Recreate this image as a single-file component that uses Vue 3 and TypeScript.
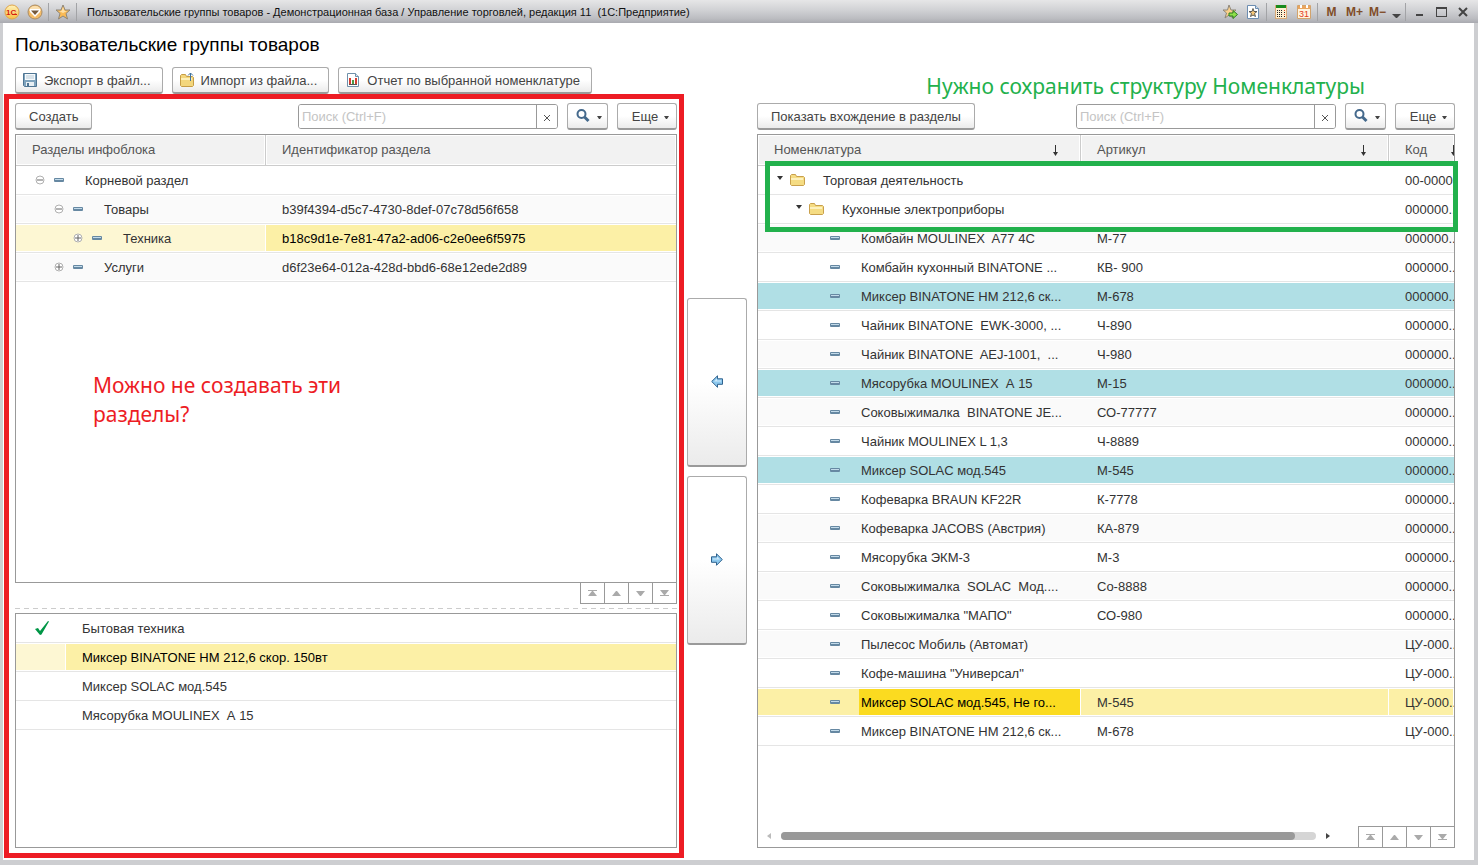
<script setup lang="ts">
import { ref } from 'vue'

interface Section {
  level: number
  open: boolean
  name: string
  id: string
  selected?: boolean
}

interface Item {
  level: number
  folder?: boolean
  name: string
  article: string
  code: string
  state?: 'marked' | 'current'
}

const sections: Section[] = [
  { level: 0, open: true, name: 'Корневой раздел', id: '' },
  { level: 1, open: true, name: 'Товары', id: 'b39f4394-d5c7-4730-8def-07c78d56f658' },
  { level: 2, open: false, name: 'Техника', id: 'b18c9d1e-7e81-47a2-ad06-c2e0ee6f5975', selected: true },
  { level: 1, open: false, name: 'Услуги', id: 'd6f23e64-012a-428d-bbd6-68e12ede2d89' },
]

const chosen = [
  { name: 'Бытовая техника', checked: true, selected: false },
  { name: 'Миксер BINATONE HM 212,6 скор. 150вт', checked: false, selected: true },
  { name: 'Миксер SOLAC мод.545', checked: false, selected: false },
  { name: 'Мясорубка MOULINEX  А 15', checked: false, selected: false },
]

const items: Item[] = [
  { level: 0, folder: true, name: 'Торговая деятельность', article: '', code: '00-0000...' },
  { level: 1, folder: true, name: 'Кухонные электроприборы', article: '', code: '000000...' },
  { level: 2, name: 'Комбайн MOULINEX  A77 4C', article: 'М-77', code: '000000...' },
  { level: 2, name: 'Комбайн кухонный BINATONE ...', article: 'КВ- 900', code: '000000...' },
  { level: 2, name: 'Миксер BINATONE HM 212,6 ск...', article: 'М-678', code: '000000...', state: 'marked' },
  { level: 2, name: 'Чайник BINATONE  EWK-3000, ...', article: 'Ч-890', code: '000000...' },
  { level: 2, name: 'Чайник BINATONE  AEJ-1001,  ...', article: 'Ч-980', code: '000000...' },
  { level: 2, name: 'Мясорубка MOULINEX  А 15', article: 'М-15', code: '000000...', state: 'marked' },
  { level: 2, name: 'Соковыжималка  BINATONE JE...', article: 'СО-77777', code: '000000...' },
  { level: 2, name: 'Чайник MOULINEX L 1,3', article: 'Ч-8889', code: '000000...' },
  { level: 2, name: 'Миксер SOLAC мод.545', article: 'М-545', code: '000000...', state: 'marked' },
  { level: 2, name: 'Кофеварка BRAUN KF22R', article: 'К-7778', code: '000000...' },
  { level: 2, name: 'Кофеварка JACOBS (Австрия)', article: 'КА-879', code: '000000...' },
  { level: 2, name: 'Мясорубка ЭКМ-3', article: 'М-3', code: '000000...' },
  { level: 2, name: 'Соковыжималка  SOLAC  Мод....', article: 'Со-8888', code: '000000...' },
  { level: 2, name: 'Соковыжималка "МАПО"', article: 'СО-980', code: '000000...' },
  { level: 2, name: 'Пылесос Мобиль (Автомат)', article: '', code: 'ЦУ-000...' },
  { level: 2, name: 'Кофе-машина "Универсал"', article: '', code: 'ЦУ-000...' },
  { level: 2, name: 'Миксер SOLAC мод.545, Не го...', article: 'М-545', code: 'ЦУ-000...', state: 'current' },
  { level: 2, name: 'Миксер BINATONE HM 212,6 ск...', article: 'М-678', code: 'ЦУ-000...' },
]

const navButtons = [
  { label: 'В начало', path: 'M1 0h9v1H1zM5 1h1l4 5H1z' },
  { label: 'Вверх', path: 'M5 1h1l4 5H1z' },
  { label: 'Вниз', path: 'M1 1h9L6 6H5z' },
  { label: 'В конец', path: 'M1 0h9L6 5H5zM1 5h9v1H1z' },
]

const leftSearch = ref('')
const rightSearch = ref('')
const indent = (level: number) => ({ paddingLeft: `${level * 19}px` })
</script>

<template>
  <div class="window">
    <header class="titlebar">
      <button class="tb-button" aria-label="Главное меню">
        <svg width="16" height="16" viewBox="0 0 16 16">
          <defs>
            <linearGradient id="gold" x1="0" y1="0" x2="0" y2="1">
              <stop offset="0" stop-color="#fff3ba" /><stop offset="1" stop-color="#f7bf45" />
            </linearGradient>
          </defs>
          <circle cx="8" cy="8" r="7" fill="url(#gold)" stroke="#e0a54a" />
          <text x="2" y="11" font-size="8" font-weight="bold" font-family="Liberation Sans, sans-serif" fill="#d42011">1С</text>
          <path d="M8 10.500h5" stroke="#d42011" />
        </svg>
      </button>
      <button class="tb-button" aria-label="Меню окна">
        <svg width="16" height="16" viewBox="0 0 16 16">
          <circle cx="8" cy="8" r="7" fill="#f5bd68" stroke="#a98c66" />
          <path d="M2 7a6 5 0 0 1 12 0z" fill="#fbe0b0" />
          <path d="M3 5h10v3l-5 5-5-5z" fill="#fff" /><path d="M4 6.500h8L8 11z" fill="#765a3c" />
        </svg>
      </button>
      <i class="tb-sep"></i>
      <button class="tb-button" aria-label="Избранное">
        <svg width="16" height="16" viewBox="0 0 16 16">
          <path d="M8 1l2 5h5l-4 3.500 1.500 5.500L8 12l-4.500 3L5 9.500 1 6h5z" fill="#fbbb55" stroke="#8e8678" />
          <path d="M8 3l1.500 4H12l-4 2-4-2h2.500z" fill="#ffe0a5" />
        </svg>
      </button>
      <i class="tb-sep"></i>
      <span class="tb-title">Пользовательские группы товаров - Демонстрационная база / Управление торговлей, редакция 11&nbsp; (1С:Предприятие)</span>
      <button class="tb-button" aria-label="Добавить в избранное">
        <svg width="16" height="16" viewBox="0 0 16 16">
          <path d="M7 1l2 5h5l-4 3.500 1 4.500-4-3-4 3 1.500-5L1 6h4.500z" fill="#fbd08a" stroke="#8e8678" />
          <path d="M7 9h4V6.500l4.500 4-4.500 4V12H7z" fill="#8fe04a" stroke="#2f7d23" />
        </svg>
      </button>
      <button class="tb-button" aria-label="Список избранного">
        <svg width="14" height="16" viewBox="0 0 14 16">
          <path d="M1.500 1.500h8l3 3v10h-11z" fill="#fff" stroke="#6c8db1" />
          <path d="M9.500 1.500v3h3" fill="#cfdeed" stroke="#6c8db1" />
          <path d="M7 4.500l1 3h3L8.500 9.500l1 3L7 11l-2.500 1.500 1-3L3 7.500h3z" fill="#f8c878" stroke="#5c5a55" />
        </svg>
      </button>
      <i class="tb-sep"></i>
      <button class="tb-button" aria-label="Калькулятор">
        <svg width="14" height="16" viewBox="0 0 14 16" shape-rendering="crispEdges">
          <path d="M1.500 1.500h11v13h-11z" fill="#fff0d2" stroke="#d8aa78" />
          <path d="M2 1h10v3H2z" fill="#178a1d" />
          <path d="M3 6h1v1H3zm2 0h1v1H5zm2 0h1v1H7zM3 8h1v1H3zm2 0h1v1H5zm2 0h1v1H7zM3 10h1v1H3zm2 0h1v1H5zm2 0h1v1H7zM3 12h1v1H3zm2 0h1v1H5zm2 0h1v1H7zM10 8h1v1h-1zm0 4h1v1h-1z" fill="#222" />
          <path d="M10 6h1v1h-1zm0 4h1v1h-1z" fill="#e03a1e" />
        </svg>
      </button>
      <button class="tb-button" aria-label="Календарь">
        <svg width="14" height="16" viewBox="0 0 14 16">
          <path d="M.5 1.500h13v13H.5z" fill="#fff4df" stroke="#d2a36c" />
          <path d="M1 2h12v3H1z" fill="#e9a55f" /><path d="M3 1h2v3H3zM9 1h2v3H9z" fill="#fff" />
          <text x="2" y="13" font-size="9" font-family="Liberation Sans, sans-serif" fill="#e33a1c">31</text>
        </svg>
      </button>
      <i class="tb-sep"></i>
      <button class="tb-button memory">M</button>
      <button class="tb-button memory">M+</button>
      <button class="tb-button memory">M−</button>
      <button class="tb-button narrow" aria-label="Параметры панели">
        <svg width="9" height="12" viewBox="0 0 9 12"><path d="M0 8h9L5 12H4z" fill="#444" /></svg>
      </button>
      <i class="tb-sep"></i>
      <button class="tb-button system" aria-label="Свернуть">
        <svg width="12" height="12" viewBox="0 0 12 12"><path d="M3 8h7v2H3z" fill="#444" /></svg>
      </button>
      <button class="tb-button system" aria-label="Развернуть">
        <svg width="12" height="12" viewBox="0 0 12 12" shape-rendering="crispEdges"><path d="M1 1h11v10H1z M2 3v7h9V3z" fill="#444" fill-rule="evenodd" /></svg>
      </button>
      <button class="tb-button system" aria-label="Закрыть">
        <svg width="12" height="12" viewBox="0 0 12 12"><path d="M2 2l8 8M10 2l-8 8" stroke="#444" stroke-width="2" /></svg>
      </button>
    </header>

    <main class="content">
      <h1>Пользовательские группы товаров</h1>
      <div class="commands">
        <button class="btn with-icon">
          <svg width="16" height="16" viewBox="0 0 16 16">
            <path d="M1.500 1.500h13v13h-12l-1-1z" fill="#7fa3bd" stroke="#4f7593" />
            <path d="M3 2h10v6H3z" fill="#f6fafc" /><path d="M4 4h8M4 6h8" stroke="#b7c9d6" />
            <path d="M4 10h8v4H4z" fill="#e9f0f4" /><path d="M5 11h2v3H5z" fill="#4f7593" />
          </svg>
          <span>Экспорт в файл...</span>
        </button>
        <button class="btn with-icon">
          <svg width="16" height="16" viewBox="0 0 16 16">
            <path d="M1.500 3.500l1-1h4l1 2h6l1 1v8l-1 1h-11l-1-1z" fill="#f3d67c" stroke="#c69d45" />
            <path d="M2 6h11v2H2z" fill="#fdf0b8" />
            <path d="M11.500 9V1M9 3.500L11.500 1 14 3.500" fill="none" stroke="#41729b" />
          </svg>
          <span>Импорт из файла...</span>
        </button>
        <button class="btn with-icon">
          <svg width="16" height="16" viewBox="0 0 16 16">
            <path d="M2.500 1.500h8l3 3v10h-11z" fill="#fff" stroke="#6f90aa" />
            <path d="M10.500 1.500v3h3" fill="#d9e5ee" stroke="#6f90aa" />
            <path d="M4 6h2v6H4z" fill="#d43f32" /><path d="M7 8h2v4H7z" fill="#4b9a45" /><path d="M10 6h2v6h-2z" fill="#d43f32" />
            <path d="M4 12.500h8" stroke="#555" />
          </svg>
          <span>Отчет по выбранной номенклатуре</span>
        </button>
      </div>

      <div class="panes">
        <section class="pane left-pane">
          <div class="toolbar">
            <button class="btn">Создать</button>
            <div class="search">
              <input v-model="leftSearch" type="text" placeholder="Поиск (Ctrl+F)" aria-label="Поиск по разделам" />
              <button aria-label="Очистить" @click="leftSearch = ''">
                <svg width="6" height="6" viewBox="0 0 6 6"><path d="M0 0l6 6M6 0L0 6" stroke="#555" /></svg>
              </button>
            </div>
            <button class="btn find" aria-label="Найти">
              <svg width="14" height="14" viewBox="0 0 14 14"><circle cx="5.500" cy="5" r="4" fill="none" stroke="#44698c" stroke-width="2" /><path d="M8.500 8l4 4" stroke="#44698c" stroke-width="3" /></svg>
              <svg class="caret" width="5" height="3" viewBox="0 0 5 3"><path d="M0 0h5L3 3H2z" fill="#444" /></svg>
            </button>
            <button class="btn more">Еще <svg class="caret" width="5" height="3" viewBox="0 0 5 3"><path d="M0 0h5L3 3H2z" fill="#444" /></svg></button>
          </div>

          <div class="grid sections">
            <table>
              <colgroup><col class="col-section" /><col /></colgroup>
              <thead>
                <tr><th>Разделы инфоблока</th><th>Идентификатор раздела</th></tr>
              </thead>
              <tbody>
                <tr v-for="(s, i) in sections" :key="s.name" :class="{ alt: i % 2 === 1, selected: s.selected }">
                  <td class="tree-cell">
                    <div class="tree" :style="indent(s.level)">
                      <svg class="toggle" width="10" height="10" viewBox="0 0 10 10">
                        <circle cx="5" cy="5" r="4" fill="#fff" stroke="#b0b0b0" />
                        <path :d="s.open ? 'M2 4.500h6v1H2z' : 'M2 4.500h6v1H2zM4.500 2h1v6h-1z'" fill="#666" />
                      </svg>
                      <svg class="dash" width="10" height="4" viewBox="0 0 10 4"><rect width="10" height="4" rx="1" fill="#6688a2" /><path d="M1 1h8v1H1z" fill="#c3dbea" /></svg>
                      <span class="label">{{ s.name }}</span>
                    </div>
                  </td>
                  <td>{{ s.id }}</td>
                </tr>
              </tbody>
            </table>
          </div>
          <div class="nav left-nav">
            <button v-for="n in navButtons" :key="n.label" :aria-label="n.label">
              <svg width="11" height="6" viewBox="0 0 11 6"><path :d="n.path" fill="#aaa" /></svg>
            </button>
          </div>
          <div class="splitter"></div>
          <div class="grid chosen">
            <table>
              <colgroup><col class="col-check" /><col /></colgroup>
              <tbody>
                <tr v-for="c in chosen" :key="c.name" :class="{ selected: c.selected }">
                  <td class="check-cell">
                    <svg v-if="c.checked" width="14" height="14" viewBox="0 0 14 14"><path d="M0 8l3-1 2 3L13 0l1 .5L6.500 13.500 5 14z" fill="#009646" /></svg>
                  </td>
                  <td>{{ c.name }}</td>
                </tr>
              </tbody>
            </table>
          </div>
          <p class="note red-note">Можно не создавать эти<br />разделы?</p>
          <div class="frame red-frame"></div>
        </section>

        <div class="transfer">
          <button class="btn" aria-label="Перенести влево">
            <svg width="12" height="13" viewBox="0 0 12 13"><path d="M.7 6.500L6.500.8v3h5v5.500h-5v3z" fill="#8cc8ee" stroke="#2f628e" /><path d="M3 6.500l3-3v2h4v1z" fill="#d0eafa" /></svg>
          </button>
          <button class="btn" aria-label="Перенести вправо">
            <svg width="12" height="13" viewBox="0 0 12 13"><path d="M11.300 6.500L5.500.8v3h-5v5.500h5v3z" fill="#8cc8ee" stroke="#2f628e" /><path d="M9 6.500l-3-3v2H2v1z" fill="#d0eafa" /></svg>
          </button>
        </div>

        <section class="pane right-pane">
          <div class="toolbar">
            <button class="btn">Показать вхождение в разделы</button>
            <div class="search">
              <input v-model="rightSearch" type="text" placeholder="Поиск (Ctrl+F)" aria-label="Поиск по номенклатуре" />
              <button aria-label="Очистить" @click="rightSearch = ''">
                <svg width="6" height="6" viewBox="0 0 6 6"><path d="M0 0l6 6M6 0L0 6" stroke="#555" /></svg>
              </button>
            </div>
            <button class="btn find" aria-label="Найти">
              <svg width="14" height="14" viewBox="0 0 14 14"><circle cx="5.500" cy="5" r="4" fill="none" stroke="#44698c" stroke-width="2" /><path d="M8.500 8l4 4" stroke="#44698c" stroke-width="3" /></svg>
              <svg class="caret" width="5" height="3" viewBox="0 0 5 3"><path d="M0 0h5L3 3H2z" fill="#444" /></svg>
            </button>
            <button class="btn more">Еще <svg class="caret" width="5" height="3" viewBox="0 0 5 3"><path d="M0 0h5L3 3H2z" fill="#444" /></svg></button>
          </div>

          <div class="grid items">
            <table>
              <colgroup><col class="col-name" /><col class="col-article" /><col /></colgroup>
              <thead>
                <tr>
                  <th v-for="h in ['Номенклатура', 'Артикул', 'Код']" :key="h">
                    <div class="sortable">
                      <span>{{ h }}</span>
                      <svg width="7" height="11" viewBox="0 0 7 11"><path d="M3 0h1v7h2L3.500 11 1 7h2z" fill="#333" /></svg>
                    </div>
                  </th>
                </tr>
              </thead>
              <tbody>
                <tr v-for="(r, i) in items" :key="i" :class="[r.state, { alt: i > 1 && i % 2 === 0 }]">
                  <td class="tree-cell">
                    <div class="tree" :style="indent(r.level)">
                      <span class="toggle"><svg v-if="r.folder" width="6" height="4" viewBox="0 0 6 4"><path d="M0 0h6L3 4z" fill="#333" /></svg></span>
                      <span class="icon">
                        <svg v-if="r.folder" width="15" height="12" viewBox="0 0 15 12"><path d="M.5 1.500l1-1h4l1 2h7l1 1v7l-1 1h-12l-1-1z" fill="#f5dc83" stroke="#c9a04c" /><path d="M1 4h12v2H1z" fill="#fdf1bd" /></svg>
                        <svg v-else width="10" height="4" viewBox="0 0 10 4"><rect width="10" height="4" rx="1" fill="#6688a2" /><path d="M1 1h8v1H1z" fill="#c3dbea" /></svg>
                      </span>
                      <span class="label">{{ r.name }}</span>
                    </div>
                  </td>
                  <td>{{ r.article }}</td>
                  <td>{{ r.code }}</td>
                </tr>
              </tbody>
            </table>
            <div class="grid-footer">
              <div class="scrollbar">
                <svg width="4" height="6" viewBox="0 0 4 6"><path d="M4 0v6L0 3z" fill="#bbb" /></svg>
                <div class="track"><div class="thumb"></div></div>
                <svg width="4" height="6" viewBox="0 0 4 6"><path d="M0 0v6l4-3z" fill="#444" /></svg>
              </div>
              <div class="nav">
                <button v-for="n in navButtons" :key="n.label" :aria-label="n.label">
                  <svg width="11" height="6" viewBox="0 0 11 6"><path :d="n.path" fill="#aaa" /></svg>
                </button>
              </div>
            </div>
          </div>
          <p class="note green-note">Нужно сохранить структуру Номенклатуры</p>
          <div class="frame green-frame"></div>
        </section>
      </div>
    </main>
  </div>
</template>

<style>
body {
  margin: 0;
}
</style>

<style scoped>
* {
  box-sizing: border-box;
}
.window {
  display: flex;
  flex-direction: column;
  height: 100vh;
  min-height: 780px;
  padding: 0 4px 5px 3px;
  background: #cdced1;
  font: 13px/16px "Liberation Sans", Arial, sans-serif;
  color: #333;
}
svg {
  display: block;
  flex: none;
}
button {
  font: inherit;
  color: inherit;
  margin: 0;
  cursor: pointer;
}

.titlebar {
  display: flex;
  align-items: center;
  flex: none;
  height: 23px;
  margin: 0 -4px 0 -3px;
  padding: 0 4px 0 0;
  background: linear-gradient(#e6e6e7, #d0d1d4 45%, #bcbdc1 80%, #a9aab0);
}
.tb-button {
  display: flex;
  align-items: center;
  justify-content: center;
  flex: none;
  width: 23px;
  height: 22px;
  padding: 0;
  border: 0;
  background: none;
}
.tb-button.narrow {
  width: 14px;
}
.tb-button.system {
  width: 22px;
}
.memory {
  color: #804d28;
  font-size: 12px;
  font-weight: bold;
}
.tb-sep {
  flex: none;
  width: 1px;
  height: 18px;
  margin: 0 2px;
  background: #a2a3a6;
}
.tb-title {
  flex: 1;
  margin-left: 8px;
  overflow: hidden;
  font-size: 11px;
  white-space: nowrap;
  color: #111;
}

.content {
  display: flex;
  flex-direction: column;
  flex: 1;
  min-height: 0;
  padding: 10px 19px 12px 12px;
  background: #fff;
}
h1 {
  margin: 0;
  font-size: 19px;
  line-height: 24px;
  font-weight: normal;
  color: #000;
}
.commands {
  display: flex;
  gap: 9px;
  margin-top: 10px;
}
.btn {
  display: flex;
  align-items: center;
  justify-content: center;
  flex: none;
  height: 27px;
  padding: 2px 13px 0;
  border: 1px solid #ababab;
  border-bottom: 2px solid #9a9a9a;
  border-radius: 3px;
  background: linear-gradient(#fff 50%, #ebebeb);
  color: #444;
  white-space: nowrap;
}
.with-icon {
  gap: 6px;
  padding: 0 11px 0 6px;
}
.with-icon span {
  padding-top: 2px;
}

.panes {
  display: flex;
  gap: 10px;
  flex: 1;
  min-height: 0;
  margin-top: 9px;
}
.pane {
  position: relative;
  display: flex;
  flex-direction: column;
  min-width: 0;
}
.left-pane {
  flex: 662 1 0;
}
.right-pane {
  flex: 698 1 0;
}
.toolbar {
  display: flex;
  align-items: center;
  gap: 9px;
  flex: none;
  height: 27px;
  margin-bottom: 4px;
}
.search {
  display: flex;
  flex: none;
  width: 260px;
  height: 25px;
  margin-left: auto;
  border: 1px solid #999;
  border-radius: 3px;
  overflow: hidden;
}
.search input {
  flex: 1;
  min-width: 0;
  padding: 0 3px;
  border: 0;
  outline: 0;
  font: inherit;
  color: #333;
}
.search input::placeholder {
  color: #c4c4c4;
  opacity: 1;
}
.search button {
  display: flex;
  align-items: center;
  justify-content: center;
  width: 21px;
  padding: 2px 0 0;
  border: 0;
  border-left: 1px solid #999;
  background: #fff;
}
.find {
  width: 41px;
  gap: 7px;
  padding: 0 4px 0 6px;
}
.find .caret {
  margin-top: 2px;
}
.more {
  width: 60px;
  gap: 6px;
  padding: 2px 5px 0 12px;
}

.grid {
  display: flex;
  flex-direction: column;
  min-height: 0;
  border: 1px solid #999;
  background: #fff;
  overflow: hidden;
}
.sections {
  flex: 450 1 0;
}
.chosen {
  flex: 234 1 0;
}
.items {
  flex: 1;
}
table {
  width: 100%;
  table-layout: fixed;
  border-collapse: separate;
  border-spacing: 0;
}
.col-section {
  width: 250px;
}
.col-check {
  width: 50px;
}
.col-name {
  width: 323px;
}
.col-article {
  width: 308px;
}
th {
  height: 31px;
  padding: 0 0 0 16px;
  border-right: 1px solid #ccc;
  border-bottom: 1px solid #ccc;
  background: #f2f2f2;
  box-shadow: inset 0 0 0 1px #fff;
  color: #555;
  font-weight: normal;
  text-align: left;
  white-space: nowrap;
  overflow: hidden;
}
th:last-child {
  border-right: 0;
}
td {
  height: 29px;
  padding: 2px 0 0 16px;
  border-bottom: 1px solid #e5e5e5;
  box-shadow: inset 0 1px #fff, inset 0 -1px #fff;
  white-space: pre;
  overflow: hidden;
}
.alt td {
  background: #fafafa;
}
.sections .selected td,
.chosen .selected td {
  background: #fcf0a6;
  color: #000;
}
.sections .selected td:first-child,
.chosen .selected td:first-child {
  background: #fdf7d3;
  color: #333;
  box-shadow: inset 0 1px #fff, inset -1px -1px #fff;
}
.marked td {
  background: #b0dfe5;
}
.current td {
  background: #fcf0a6;
  box-shadow: inset 0 1px #fff, inset -1px -1px #fff;
}
.current .label {
  background: #fbdb20;
  color: #000;
}
td.tree-cell,
td.check-cell {
  padding: 0;
}
.check-cell svg {
  margin-left: 19px;
}
.tree {
  display: flex;
  align-items: center;
  height: 26px;
  margin-right: 1px;
}
.tree .label {
  flex: 1;
  padding: 2px 0 0 2px;
  line-height: 24px;
}
.sections .toggle {
  margin-left: 19px;
}
.sections .dash {
  margin: 0 19px 0 9px;
}
.items .toggle {
  width: 8px;
  margin-left: 18px;
}
.items .toggle svg {
  margin: 0 0 4px 1px;
}
.items .icon {
  display: flex;
  justify-content: center;
  width: 18px;
  margin: 0 15px 0 4px;
}
.sortable {
  display: flex;
  align-items: center;
  justify-content: space-between;
  min-width: 52px;
  padding-right: 21px;
}
th:last-child .sortable {
  padding-right: 0;
}

.nav {
  display: flex;
  flex: none;
  border-left: 1px solid #999;
}
.nav button {
  display: flex;
  align-items: center;
  justify-content: center;
  width: 24px;
  height: 20px;
  padding: 0;
  border: 0;
  border-right: 1px solid #999;
  background: #fff;
}
.left-nav {
  align-self: flex-end;
  border-bottom: 1px solid #999;
}
.splitter {
  flex: none;
  height: 1px;
  margin: 4px 0;
  background: repeating-linear-gradient(90deg, #ccc 0 5px, #fff 5px 9px);
}
.grid-footer {
  display: flex;
  align-items: flex-end;
  flex: none;
  margin-top: auto;
}
.grid-footer .nav {
  border-top: 1px solid #999;
}
.grid-footer .nav button:last-child {
  width: 23px;
  border-right: 0;
}
.scrollbar {
  display: flex;
  align-items: center;
  gap: 10px;
  flex: 1;
  height: 22px;
  padding: 0 28px 0 9px;
}
.track {
  flex: 1;
  height: 8px;
  border-radius: 4px;
  background: #d5d5d5;
}
.thumb {
  width: 96%;
  height: 8px;
  border-radius: 4px;
  background: #999;
}

.transfer {
  display: flex;
  flex-direction: column;
  justify-content: center;
  gap: 9px;
  flex: none;
  width: 60px;
  padding-bottom: 9px;
}
.transfer .btn {
  height: 169px;
  padding: 0;
}

/* Review marks laid over the form */
.note {
  position: absolute;
  margin: 0;
  font: 21px/29px "Noto Sans", "Open Sans", sans-serif;
  white-space: nowrap;
  pointer-events: none;
}
.red-note {
  top: 268px;
  left: 78px;
  color: #ed1c24;
}
.green-note {
  top: -31px;
  right: 90px;
  color: #22b14c;
}
.frame {
  position: absolute;
  border: 5px solid;
  pointer-events: none;
}
.red-frame {
  inset: -9px -7px -10px -11px;
  border-color: #ed1c24;
}
.green-frame {
  top: 58px;
  right: -3px;
  left: 8px;
  height: 71px;
  border-color: #22b14c;
}
</style>
